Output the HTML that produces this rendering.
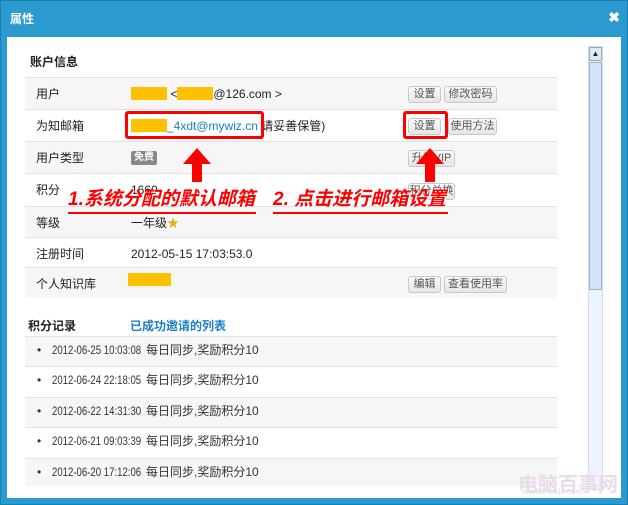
<!DOCTYPE html>
<html><head><meta charset="utf-8"><style>
*{margin:0;padding:0;box-sizing:border-box}
body{width:628px;height:505px;background:#2a9ad0;font-family:"Liberation Sans","Noto Sans CJK SC",sans-serif;font-size:12px;color:#222;position:relative;overflow:hidden}
.frame{position:absolute;left:0;top:0;width:628px;height:505px;background:#2a9ad0;border:1px solid #1c7fb0}
.title{position:absolute;left:10px;top:11px;color:#fff;font-size:12px;font-weight:bold;line-height:16px}
.close{position:absolute;right:8px;top:9px;color:#fff;font-weight:bold;font-size:14px}
.content{position:absolute;left:7px;top:37px;width:614px;height:461px;background:#fff}
.abs{position:absolute}
.row{position:absolute;left:25px;width:532px;border-top:1px solid #e2e2e2}
.g{background:#f6f6f6}
.lab{position:absolute;left:11px;top:8px;line-height:16px}
.val{position:absolute;left:106px;top:8px;line-height:16px;white-space:nowrap}
.btn{position:absolute;height:17px;border:1px solid #c8c8c8;border-radius:3px;background:linear-gradient(#fafafa,#e6e6e6);font-size:11px;color:#555;text-align:center;line-height:15px;white-space:nowrap;overflow:hidden}
.y{display:inline-block;background:#ffc000;height:13px;vertical-align:-2px}
.red{position:absolute;color:#f00;font-weight:bold;font-style:italic;font-size:19px;border-bottom:2px solid #f00;line-height:24px;white-space:nowrap;text-shadow:1px 1px 0 #fff}
.li{position:absolute;left:25px;width:532px;height:30px;border-top:1px solid #e2e2e2;font-size:12px;color:#333}
.li span{position:absolute;top:5px;line-height:16px;white-space:nowrap}
.li .d{font-size:12px;transform:scaleX(0.8);transform-origin:0 0}
</style></head><body>
<div class="frame"></div>
<div class="title">属性</div>
<div class="close">✖</div>
<div class="content"></div>
<div class="abs" style="left:30px;top:54px;font-weight:bold;font-size:12px;line-height:16px">账户信息</div>
<div class="row g" style="top:77px;height:32px"><span class="lab">用户</span><span class="val"><span class="y" style="width:36px"></span> &lt;<span class="y" style="width:36px"></span>@126.com &gt;</span></div>
<div class="row" style="top:109px;height:32px"><span class="lab">为知邮箱</span><span class="val"><span class="y" style="width:36px"></span><span style="color:#1a7fc4">_4xdt@mywiz.cn</span> 请妥善保管)</span></div>
<div class="row g" style="top:141px;height:32px"><span class="lab">用户类型</span><span class="abs" style="left:106px;top:9px;background:#888;color:#fff;font-size:10px;font-weight:bold;padding:0 3px;border-radius:2px;line-height:14px">免费</span></div>
<div class="row" style="top:173px;height:33px"><span class="lab">积分</span><span class="val">1660</span></div>
<div class="row g" style="top:206px;height:31px"><span class="lab">等级</span><span class="val">一年级<span style="color:#e5b200">★</span></span></div>
<div class="row" style="top:237px;height:30px"><span class="lab">注册时间</span><span class="val">2012-05-15 17:03:53.0</span></div>
<div class="row g" style="top:267px;height:31px"><span class="lab">个人知识库</span><span class="abs" style="left:103px;top:5px;width:43px;height:13px;background:#ffc000"></span></div>
<div class="btn" style="left:408px;top:86px;width:33px">设置</div>
<div class="btn" style="left:444px;top:86px;width:53px">修改密码</div>
<div class="btn" style="left:408px;top:118px;width:33px">设置</div>
<div class="btn" style="left:448px;top:118px;width:49px">使用方法</div>
<div class="btn" style="left:408px;top:150px;width:47px">升级VIP</div>
<div class="btn" style="left:408px;top:183px;width:47px">积分兑换</div>
<div class="btn" style="left:408px;top:276px;width:33px">编辑</div>
<div class="btn" style="left:444px;top:276px;width:63px">查看使用率</div>
<div class="abs" style="left:125px;top:111px;width:139px;height:28px;border:3px solid #f00;border-radius:3px"></div>
<div class="abs" style="left:403px;top:111px;width:45px;height:28px;border:3px solid #f00;border-radius:3px"></div>
<svg class="abs" style="left:180px;top:147px" width="34" height="36"><polygon points="17,1 31,17 22,17 22,35 12,35 12,17 3,17" fill="#f00"/></svg>
<svg class="abs" style="left:413px;top:147px" width="34" height="36"><polygon points="17,1 31,17 22,17 22,35 12,35 12,17 3,17" fill="#f00"/></svg>
<div class="red" style="left:68px;top:188px;width:188px">1.系统分配的默认邮箱</div>
<div class="red" style="left:273px;top:188px;width:175px">2. 点击进行邮箱设置</div>
<div class="abs" style="left:28px;top:318px;font-weight:bold;line-height:16px">积分记录</div>
<div class="abs" style="left:130px;top:318px;font-weight:bold;color:#1a7fc4;line-height:16px">已成功邀请的列表</div>
<div class="li g" style="top:336px"><span style="left:12px">•</span><span class="d" style="left:27px">2012-06-25 10:03:08</span><span style="left:121px">每日同步,奖励积分10</span></div>
<div class="li" style="top:366px"><span style="left:12px">•</span><span class="d" style="left:27px">2012-06-24 22:18:05</span><span style="left:121px">每日同步,奖励积分10</span></div>
<div class="li g" style="top:397px"><span style="left:12px">•</span><span class="d" style="left:27px">2012-06-22 14:31:30</span><span style="left:121px">每日同步,奖励积分10</span></div>
<div class="li" style="top:427px"><span style="left:12px">•</span><span class="d" style="left:27px">2012-06-21 09:03:39</span><span style="left:121px">每日同步,奖励积分10</span></div>
<div class="li g" style="top:458px;height:28px"><span style="left:12px">•</span><span class="d" style="left:27px">2012-06-20 17:12:06</span><span style="left:121px">每日同步,奖励积分10</span></div>
<div class="abs" style="left:588px;top:46px;width:15px;height:444px;background:#eef4fb;border:1px solid #cfdcec"></div>
<div class="abs" style="left:589px;top:47px;width:13px;height:14px;background:#dde8f5;border:1px solid #9ab;font-size:8px;text-align:center;line-height:12px">▲</div>
<div class="abs" style="left:589px;top:62px;width:13px;height:228px;background:#d4e3f5;border:1px solid #9bb3d4"></div>
<div class="abs" style="left:518px;top:468px;font-size:20px;font-weight:bold;color:#eadbe8">电脑百事网</div>
<div class="abs" style="left:522px;top:489px;font-size:7px;color:#ddd">WWW.PC841.COM</div>
</body></html>
